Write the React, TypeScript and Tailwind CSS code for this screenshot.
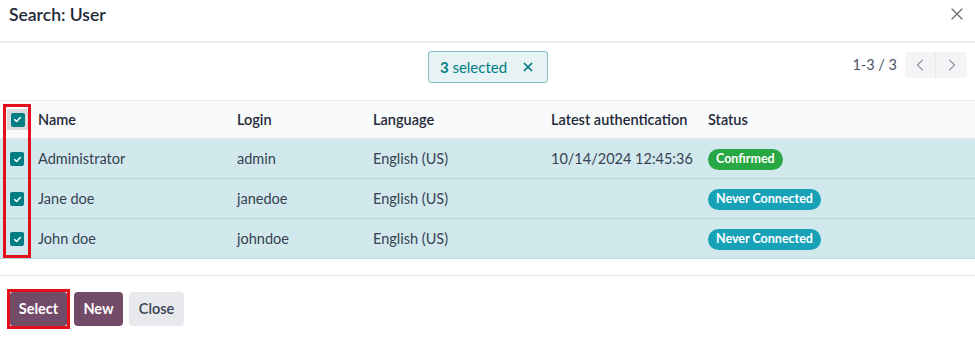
import { X, ChevronLeft, ChevronRight } from "lucide-react";

const rows = [
  { name: "Administrator", login: "admin", lang: "English (US)", auth: "10/14/2024 12:45:36", status: "Confirmed" },
  { name: "Jane doe", login: "janedoe", lang: "English (US)", auth: "", status: "Never Connected" },
  { name: "John doe", login: "johndoe", lang: "English (US)", auth: "", status: "Never Connected" },
];

function Check() {
  return (
    <span className="inline-flex h-[14px] w-[14px] items-center justify-center rounded-[2px] bg-[#017e84]">
      <svg viewBox="0 0 12 12" className="h-[9px] w-[9px]" fill="none">
        <path d="M2.2 6.2 4.8 8.6 9.8 3.4" stroke="white" strokeWidth="2" strokeLinecap="round" strokeLinejoin="round" />
      </svg>
    </span>
  );
}

export default function App() {
  return (
    <div className="relative h-[338px] w-[975px] overflow-hidden bg-white text-[14.5px] text-[#374151]" style={{ fontFamily: 'Lato, "Noto Sans", sans-serif' }}>
      <header className="flex h-[43px] items-start justify-between border-b-2 border-[#ededed] pl-[9px] pr-[8px] pt-[3px]">
        <h1 className="text-[17.5px] font-semibold leading-[24px] text-[#1f2937]">Search: User</h1>
        <X className="mt-[1px] h-[20px] w-[20px] text-[#6b6b6b]" strokeWidth={1.5} />
      </header>

      <div className="relative flex h-[57px] items-start justify-center pt-[8px]">
        <div className="flex h-[32px] w-[120px] items-center justify-center gap-[14px] rounded-[3px] border border-[#82bfc2] bg-[#e6f2f3] text-[#017e84]">
          <span className="text-[15px]"><b>3</b> selected</span>
          <X className="h-[14px] w-[14px]" strokeWidth={3} />
        </div>
        <div className="absolute right-[8px] top-[9px] flex items-center gap-[8px]">
          <span className="text-[14.5px] text-[#4b5563]">1-3 / 3</span>
          <div className="flex h-[26px] overflow-hidden rounded-[3px] bg-[#f3f4f6]">
            <span className="flex w-[31px] items-center justify-center border-r border-[#e5e7eb]"><ChevronLeft className="h-[20px] w-[20px] text-[#6b7280]" strokeWidth={1.25} /></span>
            <span className="flex w-[31px] items-center justify-center"><ChevronRight className="h-[20px] w-[20px] text-[#6b7280]" strokeWidth={1.25} /></span>
          </div>
        </div>
      </div>

      <div className="relative">
        <div className="grid h-[39px] grid-cols-[31px_206px_136px_178px_157px_1fr] items-center border-y border-[#e5e7eb] bg-[#f9fafb] text-[14.5px] font-semibold text-[#1f2937]">
          <span className="ml-[7px] flex h-[21px] w-[21px] items-center justify-center bg-[#d9d9de]"><Check /></span>
          <span className="pl-[7px]">Name</span>
          <span>Login</span>
          <span>Language</span>
          <span>Latest authentication</span>
          <span>Status</span>
        </div>
        {rows.map((r) => (
          <div key={r.login} className="grid h-[40px] grid-cols-[31px_206px_136px_178px_157px_1fr] items-center border-b border-[#b9d6da] bg-[#d1e9ed]">
            <span className="pl-[10px]"><Check /></span>
            <span className="pl-[7px]">{r.name}</span>
            <span>{r.login}</span>
            <span>{r.lang}</span>
            <span>{r.auth}</span>
            <span>
              <span className={`inline-block rounded-full px-[8px] py-[1px] text-[12.5px] font-bold text-white ${r.status === "Confirmed" ? "bg-[#28a745]" : "bg-[#17a2b8]"}`}>{r.status}</span>
            </span>
          </div>
        ))}
        <div className="pointer-events-none absolute left-[3px] top-[4px] h-[154px] w-[28px] border-[3px] border-[#e3101c]" />
      </div>

      <footer className="mt-[16px] flex items-center gap-[4px] border-t border-[#e5e7eb] pl-[7px] pt-[13px]">
        <div className="border-[3px] border-[#e3101c]">
          <button className="h-[34px] w-[57px] rounded-[3px] bg-[#714b67] font-bold text-white">Select</button>
        </div>
        <button className="h-[34px] w-[49px] rounded-[4px] bg-[#714b67] font-bold text-white">New</button>
        <button className="ml-[2px] h-[34px] w-[55px] rounded-[4px] bg-[#e7e9ed] font-semibold text-[#374151]">Close</button>
      </footer>
    </div>
  );
}
